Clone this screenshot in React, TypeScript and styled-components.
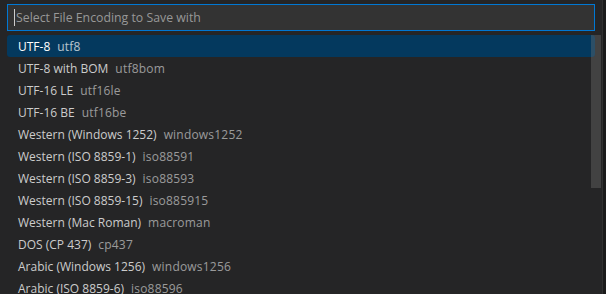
import styled, { createGlobalStyle } from "styled-components";

const GlobalStyle = createGlobalStyle`
  html, body {
    margin: 0;
    padding: 0;
    background: #1e1e1e;
    overflow: hidden;
  }
  body {
    font-family: "Open Sans", "Noto Sans", sans-serif;
    font-size: 12px;
  }
`;

const encodings = [
  { label: "UTF-8", id: "utf8" },
  { label: "UTF-8 with BOM", id: "utf8bom" },
  { label: "UTF-16 LE", id: "utf16le" },
  { label: "UTF-16 BE", id: "utf16be" },
  { label: "Western (Windows 1252)", id: "windows1252" },
  { label: "Western (ISO 8859-1)", id: "iso88591" },
  { label: "Western (ISO 8859-3)", id: "iso88593" },
  { label: "Western (ISO 8859-15)", id: "iso885915" },
  { label: "Western (Mac Roman)", id: "macroman" },
  { label: "DOS (CP 437)", id: "cp437" },
  { label: "Arabic (Windows 1256)", id: "windows1256" },
  { label: "Arabic (ISO 8859-6)", id: "iso88596" },
];

export default function App() {
  return (
    <>
      <GlobalStyle />
      <Page>
        <Widget>
          <InputBox>
            <Caret />
            <Placeholder>Select File Encoding to Save with</Placeholder>
          </InputBox>
          <List>
            {encodings.map((e, i) => (
              <Row key={e.id} $selected={i === 0}>
                <Label>{e.label}</Label>
                <Description>{e.id}</Description>
              </Row>
            ))}
            <Scrollbar />
          </List>
        </Widget>
        <Edge />
      </Page>
    </>
  );
}

const Page = styled.div`
  display: flex;
  width: 606px;
  height: 294px;
`;

const Widget = styled.div`
  width: 602px;
  height: 294px;
  box-sizing: border-box;
  padding: 4px 7px 0 7px;
  background: #252526;
  display: flex;
  flex-direction: column;
  gap: 4px;
  overflow: hidden;
`;

const Edge = styled.div`
  flex: 1;
  background: #1b1b1b;
  border-left: 1px solid #303030;
`;

const InputBox = styled.div`
  flex-shrink: 0;
  height: 27px;
  box-sizing: border-box;
  border: 1px solid #0078d4;
  background: #333333;
  display: flex;
  align-items: center;
  padding-left: 6px;
`;

const Caret = styled.span`
  width: 1px;
  height: 17px;
  background: #cccccc;
`;

const Placeholder = styled.span`
  color: #989898;
  font-size: 12.3px;
  margin-left: 1px;
  white-space: nowrap;
`;

const List = styled.div`
  flex-shrink: 0;
  position: relative;
  display: flex;
  flex-direction: column;
`;

const Row = styled.div<{ $selected?: boolean }>`
  height: 22px;
  flex-shrink: 0;
  display: flex;
  align-items: center;
  padding-left: 11px;
  border-radius: 3px;
  background: ${(p) => (p.$selected ? "#04395e" : "transparent")};
  color: ${(p) => (p.$selected ? "#ffffff" : "#cccccc")};
  white-space: nowrap;
`;

const Label = styled.span`
  font-size: 12px;
`;

const Description = styled.span`
  font-size: 12px;
  letter-spacing: 0.2px;
  margin-left: 7px;
  opacity: 0.7;
`;

const Scrollbar = styled.div`
  position: absolute;
  top: 0;
  right: -6px;
  width: 10px;
  height: 153px;
  background: rgba(121, 121, 121, 0.35);
`;
